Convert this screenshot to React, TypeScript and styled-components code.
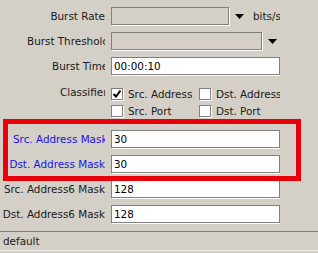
import styled, { createGlobalStyle } from "styled-components";

const GlobalStyle = createGlobalStyle`
    html, body {
        margin: 0;
        padding: 0;
        background: #d4d0c8;
    }
    body {
        font-family: "DejaVu Sans", "Liberation Sans", sans-serif;
        font-size: 10.4px;
        color: #1a1a1a;
    }
`;

const Window = styled.div`
    position: relative;
    width: 318px;
    height: 253px;
    background: #d4d0c8;
    overflow: hidden;
`;

const Form = styled.div`
    width: 280px;
    height: 231px;
    box-sizing: border-box;
    padding-top: 7px;
    overflow: hidden;
    display: grid;
    grid-template-columns: 105px 1fr;
    column-gap: 6px;
    row-gap: 7px;
    align-content: start;
`;

const LabelCell = styled.div<{ $blue?: boolean }>`
    height: 18px;
    display: flex;
    justify-content: flex-end;
    align-items: center;
    overflow: hidden;
    color: ${({ $blue }) => ($blue ? "#1414e6" : "#1a1a1a")};
`;

const LabelText = styled.span<{ $clip?: number }>`
    white-space: nowrap;
    overflow: hidden;
    ${({ $clip }) => ($clip ? `width: ${$clip}px; flex: none;` : "")}
`;

const Field = styled.div`
    height: 18px;
    display: flex;
    align-items: center;
    white-space: nowrap;
`;

const Input = styled.div<{ $width: number; $disabled?: boolean }>`
    width: ${({ $width }) => $width}px;
    height: 18px;
    box-sizing: border-box;
    flex: none;
    border: 1px solid #808080;
    box-shadow: 1px 1px 0 #ffffff;
    background: ${({ $disabled }) => ($disabled ? "#d4d0c8" : "#ffffff")};
    color: #000;
    padding: 0 2px;
    display: flex;
    align-items: center;
`;

const Arrow = styled.svg`
    flex: none;
    margin-left: 6px;
`;

const Unit = styled.span`
    margin-left: 9px;
`;

const ClassifierLabel = styled(LabelCell)`
    height: 17px;
    align-self: start;
    margin-top: 1px;
`;

const CheckGrid = styled.div`
    height: 41px;
    display: grid;
    grid-template-columns: 88px 88px;
    grid-auto-rows: 17px;
    align-content: start;
    padding-top: 3px;
    box-sizing: border-box;
    white-space: nowrap;
`;

const CheckItem = styled.label`
    display: flex;
    align-items: center;
    gap: 5px;
`;

const Box = styled.span`
    width: 12px;
    height: 12px;
    box-sizing: border-box;
    flex: none;
    border: 1px solid #808080;
    box-shadow: 1px 1px 0 #ffffff;
    background: #ffffff;
    display: flex;
    align-items: center;
    justify-content: center;
`;

const StatusBar = styled.div`
    height: 18px;
    border-top: 1px solid #808080;
    border-bottom: 1px solid #eeece8;
    padding-left: 3px;
    display: flex;
    align-items: center;
    color: #1a1a1a;
`;

const Highlight = styled.div`
    position: absolute;
    left: 3px;
    top: 119px;
    width: 298px;
    height: 62px;
    box-sizing: border-box;
    border: 5px solid #e8000b;
    pointer-events: none;
`;

const DownArrow = () => (
    <Arrow width="9" height="5" viewBox="0 0 9 5">
        <path d="M0 0 H9 L4.5 5 Z" fill="#000" />
    </Arrow>
);

const Check = ({ checked, text }: { checked?: boolean; text: string }) => (
    <CheckItem>
        <Box>
            {checked && (
                <svg width="10" height="10" viewBox="0 0 10 10">
                    <path d="M1.5 5 L4 7.5 L8.5 1.5" stroke="#000" strokeWidth="2" fill="none" />
                </svg>
            )}
        </Box>
        {text}
    </CheckItem>
);

const Row = ({ label, clip, blue, children }: { label: string; clip?: number; blue?: boolean; children: React.ReactNode }) => (
    <>
        <LabelCell $blue={blue}>
            <LabelText $clip={clip}>{label}</LabelText>
        </LabelCell>
        <Field>{children}</Field>
    </>
);

export default function App() {
    return (
        <Window>
            <GlobalStyle />
            <Form>
                <Row label="Burst Rate">
                    <Input $width={118} $disabled />
                    <DownArrow />
                    <Unit>bits/s</Unit>
                </Row>
                <Row label="Burst Threshold" clip={78}>
                    <Input $width={151} $disabled />
                    <DownArrow />
                </Row>
                <Row label="Burst Time" clip={53}>
                    <Input $width={169}>00:00:10</Input>
                </Row>
                <ClassifierLabel>
                    <LabelText $clip={45}>Classifier</LabelText>
                </ClassifierLabel>
                <CheckGrid>
                    <Check checked text="Src. Address" />
                    <Check text="Dst. Address" />
                    <Check text="Src. Port" />
                    <Check text="Dst. Port" />
                </CheckGrid>
                <Row label="Src. Address Mask" clip={92} blue>
                    <Input $width={169}>30</Input>
                </Row>
                <Row label="Dst. Address Mask" blue>
                    <Input $width={169}>30</Input>
                </Row>
                <Row label="Src. Address6 Mask">
                    <Input $width={169}>128</Input>
                </Row>
                <Row label="Dst. Address6 Mask">
                    <Input $width={169}>128</Input>
                </Row>
            </Form>
            <StatusBar>default</StatusBar>
            <Highlight />
        </Window>
    );
}
